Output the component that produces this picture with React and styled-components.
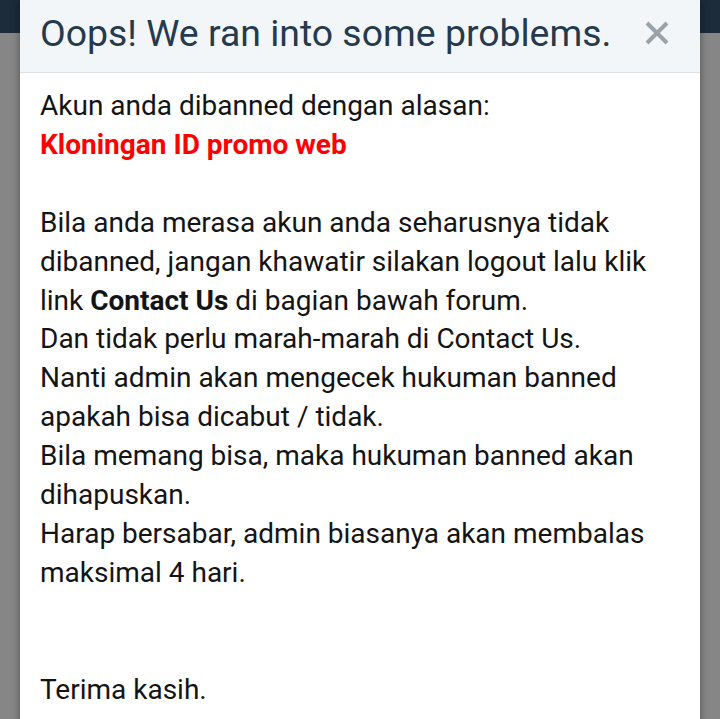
import React from "react";
import styled, { createGlobalStyle } from "styled-components";

const Global = createGlobalStyle`
  html, body {
    margin: 0;
    padding: 0;
    height: 100%;
    overflow: hidden;
    font-family: Roboto, "Noto Sans", sans-serif;
  }
`;

const Page = styled.div`
  height: 719px;
  background: #f4f4f4;
  position: relative;
  overflow: hidden;
`;

const TopBar = styled.div`
  height: 33px;
  background: #34506b;
`;

const Overlay = styled.div`
  position: absolute;
  inset: 0;
  background: rgba(0, 0, 0, 0.45);
`;

const Modal = styled.div`
  position: absolute;
  top: 0;
  left: 20px;
  width: 680px;
  height: 760px;
  background: #fff;
  box-shadow: 0 0 8px rgba(0, 0, 0, 0.4);
  display: flex;
  flex-direction: column;
`;

const Header = styled.div`
  height: 73px;
  background: #f3f6f9;
  border-bottom: 1px solid #dde1e5;
  display: flex;
  align-items: center;
  justify-content: space-between;
  padding: 0 30px 6px 20px;
  box-sizing: border-box;
`;

const Title = styled.h1`
  margin: 0;
  font-size: 37.4px;
  font-weight: 400;
  color: #253a4d;
`;

const Close = styled.button`
  border: 0;
  background: none;
  padding: 0;
  width: 26px;
  height: 26px;
  display: flex;
  align-items: center;
  justify-content: center;
  cursor: pointer;
`;

const Body = styled.div`
  padding: 14px 20px;
  font-size: 28px;
  line-height: 38.9px;
  color: #141414;
`;

const Reason = styled.span`
  color: #ff0000;
  font-weight: 700;
`;

const Strong = styled.b`
  font-weight: 700;
`;

export default function App() {
  return (
    <>
      <Global />
      <Page>
        <TopBar />
        <Overlay />
        <Modal>
          <Header>
            <Title>Oops! We ran into some problems.</Title>
            <Close aria-label="Close">
              <svg width="24" height="24" viewBox="0 0 24 24">
                <path d="M2 2 L22 22 M22 2 L2 22" stroke="#9ba3aa" strokeWidth="4" />
              </svg>
            </Close>
          </Header>
          <Body>
            Akun anda dibanned dengan alasan:
            <br />
            <Reason>Kloningan ID promo web</Reason>
            <br />
            <br />
            Bila anda merasa akun anda seharusnya tidak dibanned, jangan khawatir silakan logout lalu klik link{" "}
            <Strong>Contact Us</Strong> di bagian bawah forum.
            <br />
            Dan tidak perlu marah-marah di Contact Us.
            <br />
            Nanti admin akan mengecek hukuman banned apakah bisa dicabut / tidak.
            <br />
            Bila memang bisa, maka hukuman banned akan dihapuskan.
            <br />
            Harap bersabar, admin biasanya akan membalas maksimal 4 hari.
            <br />
            <br />
            <br />
            Terima kasih.
          </Body>
        </Modal>
      </Page>
    </>
  );
}
